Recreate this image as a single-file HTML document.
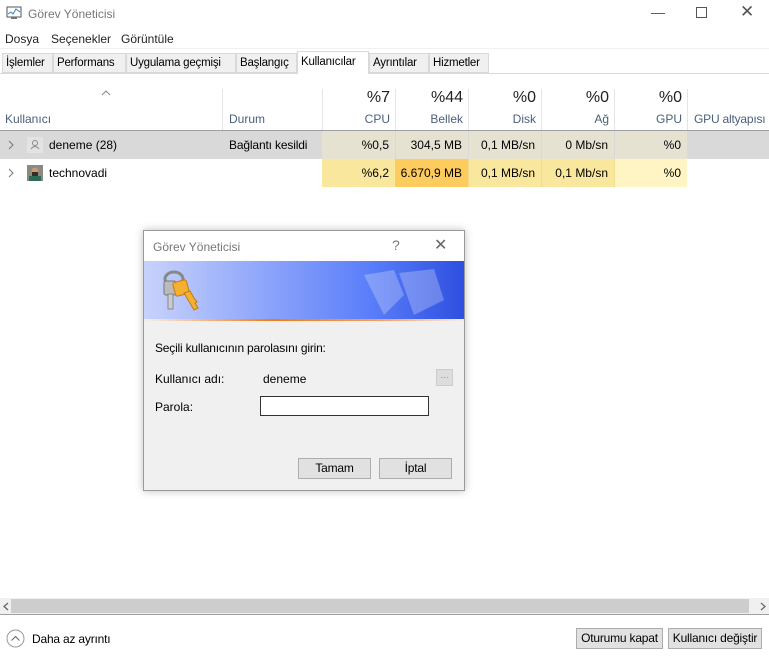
<!DOCTYPE html>
<html><head><meta charset="utf-8"><style>
*{margin:0;padding:0;box-sizing:border-box}
body{width:769px;height:661px;background:#fff;font-family:"Liberation Sans",sans-serif;font-size:12px;color:#000;position:relative;overflow:hidden}
.a{position:absolute;white-space:nowrap}
.tab{position:absolute;top:53px;height:20px;border:1px solid #d9d9d9;background:#f0f0f0;padding:3px 0 0 3px;font-size:11.5px;letter-spacing:-0.2px;overflow:hidden}
.cell{position:absolute;height:28px;line-height:28px;text-align:right;padding-right:6px}
.btn{position:absolute;background:#e1e1e1;border:1px solid #adadad;text-align:center;font-size:12px;letter-spacing:-0.2px}
</style></head><body>
<svg class="a" style="left:6px;top:6px" width="16" height="14"><rect x="1" y="1" width="14" height="10" fill="#fff" stroke="#555"/><polyline points="2,8 5,6 7,8 10,3 14,6" fill="none" stroke="#2a7fd4"/><rect x="5" y="11" width="6" height="2" fill="#777"/></svg>
<div class="a" style="left:28px;top:7px;font-size:12px;color:#777">Görev Yöneticisi</div>
<div class="a" style="left:651px;top:4px;color:#555;font-size:14px">&#8212;</div>
<div class="a" style="left:696px;top:7px;width:11px;height:11px;border:1px solid #555"></div>
<div class="a" style="left:740px;top:2px;color:#555;font-size:17px">&#10005;</div>
<div class="a" style="left:5px;top:32px;color:#222">Dosya</div>
<div class="a" style="left:51px;top:32px;color:#222">Seçenekler</div>
<div class="a" style="left:121px;top:32px;color:#222">Görüntüle</div>
<div class="a" style="left:0;top:48px;width:769px;height:1px;background:#f0f0f0"></div>
<div class="a" style="left:0;top:73px;width:769px;height:1px;background:#d9d9d9"></div>
<div class="tab" style="left:2px;width:51px">İşlemler</div>
<div class="tab" style="left:53px;width:73px">Performans</div>
<div class="tab" style="left:126px;width:110px">Uygulama geçmişi</div>
<div class="tab" style="left:236px;width:61px">Başlangıç</div>
<div class="tab" style="left:297px;top:51px;height:23px;width:72px;background:#fff;border-bottom:none;padding-top:4px">Kullanıcılar</div>
<div class="tab" style="left:369px;width:60px">Ayrıntılar</div>
<div class="tab" style="left:429px;width:60px">Hizmetler</div>
<svg class="a" style="left:101px;top:90px" width="10" height="6"><polyline points="1,5 5,1 9,5" fill="none" stroke="#888"/></svg>
<div class="a" style="left:5px;top:112px;color:#4c607a">Kullanıcı</div>
<div class="a" style="left:229px;top:112px;color:#4c607a">Durum</div>
<div class="a" style="left:222px;top:89px;width:1px;height:41px;background:#e5e5e5"></div>
<div class="a" style="left:322px;top:89px;width:1px;height:41px;background:#e5e5e5"></div>
<div class="a" style="left:395px;top:89px;width:1px;height:41px;background:#e5e5e5"></div>
<div class="a" style="left:468px;top:89px;width:1px;height:41px;background:#e5e5e5"></div>
<div class="a" style="left:541px;top:89px;width:1px;height:41px;background:#e5e5e5"></div>
<div class="a" style="left:614px;top:89px;width:1px;height:41px;background:#e5e5e5"></div>
<div class="a" style="left:687px;top:89px;width:1px;height:41px;background:#e5e5e5"></div>
<div class="a" style="left:322px;top:89px;width:367px;font-size:16px;color:#222">
<span class="a" style="right:299px">%7</span><span class="a" style="right:226px">%44</span><span class="a" style="right:153px">%0</span><span class="a" style="right:80px">%0</span><span class="a" style="right:7px">%0</span></div>
<div class="a" style="left:322px;top:112px;width:367px;color:#4c607a">
<span class="a" style="right:299px">CPU</span><span class="a" style="right:226px">Bellek</span><span class="a" style="right:153px">Disk</span><span class="a" style="right:80px">Ağ</span><span class="a" style="right:7px">GPU</span></div>
<div class="a" style="left:694px;top:112px;color:#4c607a;letter-spacing:-0.2px">GPU altyapısı</div>
<div class="a" style="left:0;top:130px;width:769px;height:1px;background:#a0a0a0"></div>
<div class="a" style="left:0;top:131px;width:769px;height:28px;background:#d9d9d9"></div>
<div class="cell" style="left:322px;top:131px;width:73px;background:#e6e2d2">%0,5</div>
<div class="cell" style="left:395px;top:131px;width:73px;background:#e6e2d2;border-left:1px solid #d9d9d9">304,5 MB</div>
<div class="cell" style="left:468px;top:131px;width:73px;background:#e6e2d2;border-left:1px solid #d9d9d9">0,1 MB/sn</div>
<div class="cell" style="left:541px;top:131px;width:73px;background:#e6e2d2;border-left:1px solid #d9d9d9">0 Mb/sn</div>
<div class="cell" style="left:614px;top:131px;width:73px;background:#e6e2d2;border-left:1px solid #d9d9d9">%0</div>
<svg class="a" style="left:8px;top:140px" width="6" height="10"><polyline points="1,1 5,5 1,9" fill="none" stroke="#777"/></svg>
<div class="a" style="left:27px;top:137px;width:16px;height:16px;background:#e3e3e3"></div>
<svg class="a" style="left:27px;top:137px" width="16" height="16"><circle cx="8" cy="6" r="2.5" fill="none" stroke="#888"/><path d="M4 12 Q8 7 12 12" fill="none" stroke="#888"/></svg>
<div class="a" style="left:49px;top:138px">deneme (28)</div>
<div class="a" style="left:229px;top:138px;letter-spacing:-0.15px">Bağlantı kesildi</div>
<div class="cell" style="left:322px;top:159px;width:73px;background:#f9e79e">%6,2</div>
<div class="cell" style="left:395px;top:159px;width:73px;background:#fdcb5e">6.670,9 MB</div>
<div class="cell" style="left:468px;top:159px;width:73px;background:#f9e79e;border-left:1px solid #f3dc8c">0,1 MB/sn</div>
<div class="cell" style="left:541px;top:159px;width:73px;background:#f9e79e;border-left:1px solid #f3dc8c">0,1 Mb/sn</div>
<div class="cell" style="left:614px;top:159px;width:73px;background:#fff4c4;border-left:1px solid #f3dc8c">%0</div>
<svg class="a" style="left:8px;top:168px" width="6" height="10"><polyline points="1,1 5,5 1,9" fill="none" stroke="#777"/></svg>
<svg class="a" style="left:27px;top:165px" width="16" height="16"><rect width="16" height="16" fill="#8a8a80"/><circle cx="8" cy="6" r="3.5" fill="#c49a7a"/><rect x="5" y="7" width="6" height="4" fill="#3a2c24"/><rect x="2" y="11" width="12" height="5" fill="#2d6a58"/></svg>
<div class="a" style="left:49px;top:166px">technovadi</div>
<div class="a" style="left:143px;top:230px;width:322px;height:261px;border:1px solid #999;background:#f0f0f0;box-shadow:0 0 8px rgba(0,0,0,.25)">
<div class="a" style="left:0;top:0;width:320px;height:30px;background:#fff"></div>
<div class="a" style="left:9px;top:9px;color:#777">Görev Yöneticisi</div>
<div class="a" style="left:248px;top:6px;color:#777;font-size:14px">?</div>
<div class="a" style="left:290px;top:4px;color:#666;font-size:16px">&#10005;</div>
<div class="a" style="left:0;top:30px;width:320px;height:58px;background:linear-gradient(90deg,#c8d3fb 0%,#8aa2fb 40%,#5b7ffa 70%,#2e4fe0 100%)"></div>
<svg class="a" style="left:210px;top:34px" width="100" height="52" opacity=".25"><path d="M10 10 L40 5 L50 30 L30 50 Z M45 8 L80 4 L90 35 L60 50 Z" fill="#fff"/></svg>
<div class="a" style="left:0;top:88px;width:320px;height:2px;background:linear-gradient(90deg,#f0f0f0,#f47a10 40%,#f8a060 75%,#f0f0f0)"></div>
<svg class="a" style="left:16px;top:36px" width="46" height="48"><ellipse cx="14" cy="12" rx="9" ry="7" fill="none" stroke="#888" stroke-width="3"/><rect x="4" y="14" width="12" height="14" rx="2" fill="#bbb" stroke="#777"/><rect x="8" y="27" width="5" height="15" fill="#ccc" stroke="#888"/><rect x="14" y="14" width="14" height="14" rx="2" fill="#f5b030" stroke="#c07a10" transform="rotate(-15 21 21)"/><path d="M24 26 L34 43 L38 41 L35 36 L37 35 L34 31 L30 24 Z" fill="#f5b030" stroke="#c07a10"/></svg>
<div class="a" style="left:11px;top:110px;letter-spacing:-0.2px">Seçili kullanıcının parolasını girin:</div>
<div class="a" style="left:11px;top:141px">Kullanıcı adı:</div>
<div class="a" style="left:119px;top:141px">deneme</div>
<div class="a" style="left:292px;top:138px;width:17px;height:17px;background:#ddd;border:1px solid #ccc;color:#999;font-size:10px;text-align:center;line-height:12px">...</div>
<div class="a" style="left:11px;top:169px">Parola:</div>
<div class="a" style="left:116px;top:165px;width:169px;height:20px;background:#fff;border:1px solid #333"></div>
<div class="btn" style="left:154px;top:227px;width:73px;height:21px;line-height:19px">Tamam</div>
<div class="btn" style="left:235px;top:227px;width:73px;height:21px;line-height:19px">İptal</div>
</div>
<div class="a" style="left:0;top:598px;width:769px;height:16px;background:#f0f0f0"></div>
<div class="a" style="left:11px;top:599px;height:14px;width:738px;background:#cdcdcd"></div>
<svg class="a" style="left:3px;top:602px" width="6" height="9"><polyline points="5,1 1,4.5 5,8" fill="none" stroke="#606060" stroke-width="1.2"/></svg>
<svg class="a" style="left:760px;top:602px" width="6" height="9"><polyline points="1,1 5,4.5 1,8" fill="none" stroke="#606060" stroke-width="1.2"/></svg>
<div class="a" style="left:0;top:614px;width:769px;height:1px;background:#a0a0a0"></div>
<svg class="a" style="left:6px;top:629px" width="19" height="19"><circle cx="9.5" cy="9.5" r="8.5" fill="none" stroke="#999"/><polyline points="5.5,11.5 9.5,7.5 13.5,11.5" fill="none" stroke="#666"/></svg>
<div class="a" style="left:32px;top:632px;letter-spacing:-0.2px">Daha az ayrıntı</div>
<div class="btn" style="left:576px;top:628px;width:87px;height:21px;line-height:19px">Oturumu kapat</div>
<div class="btn" style="left:668px;top:628px;width:94px;height:21px;line-height:19px">Kullanıcı değiştir</div>
</body></html>
